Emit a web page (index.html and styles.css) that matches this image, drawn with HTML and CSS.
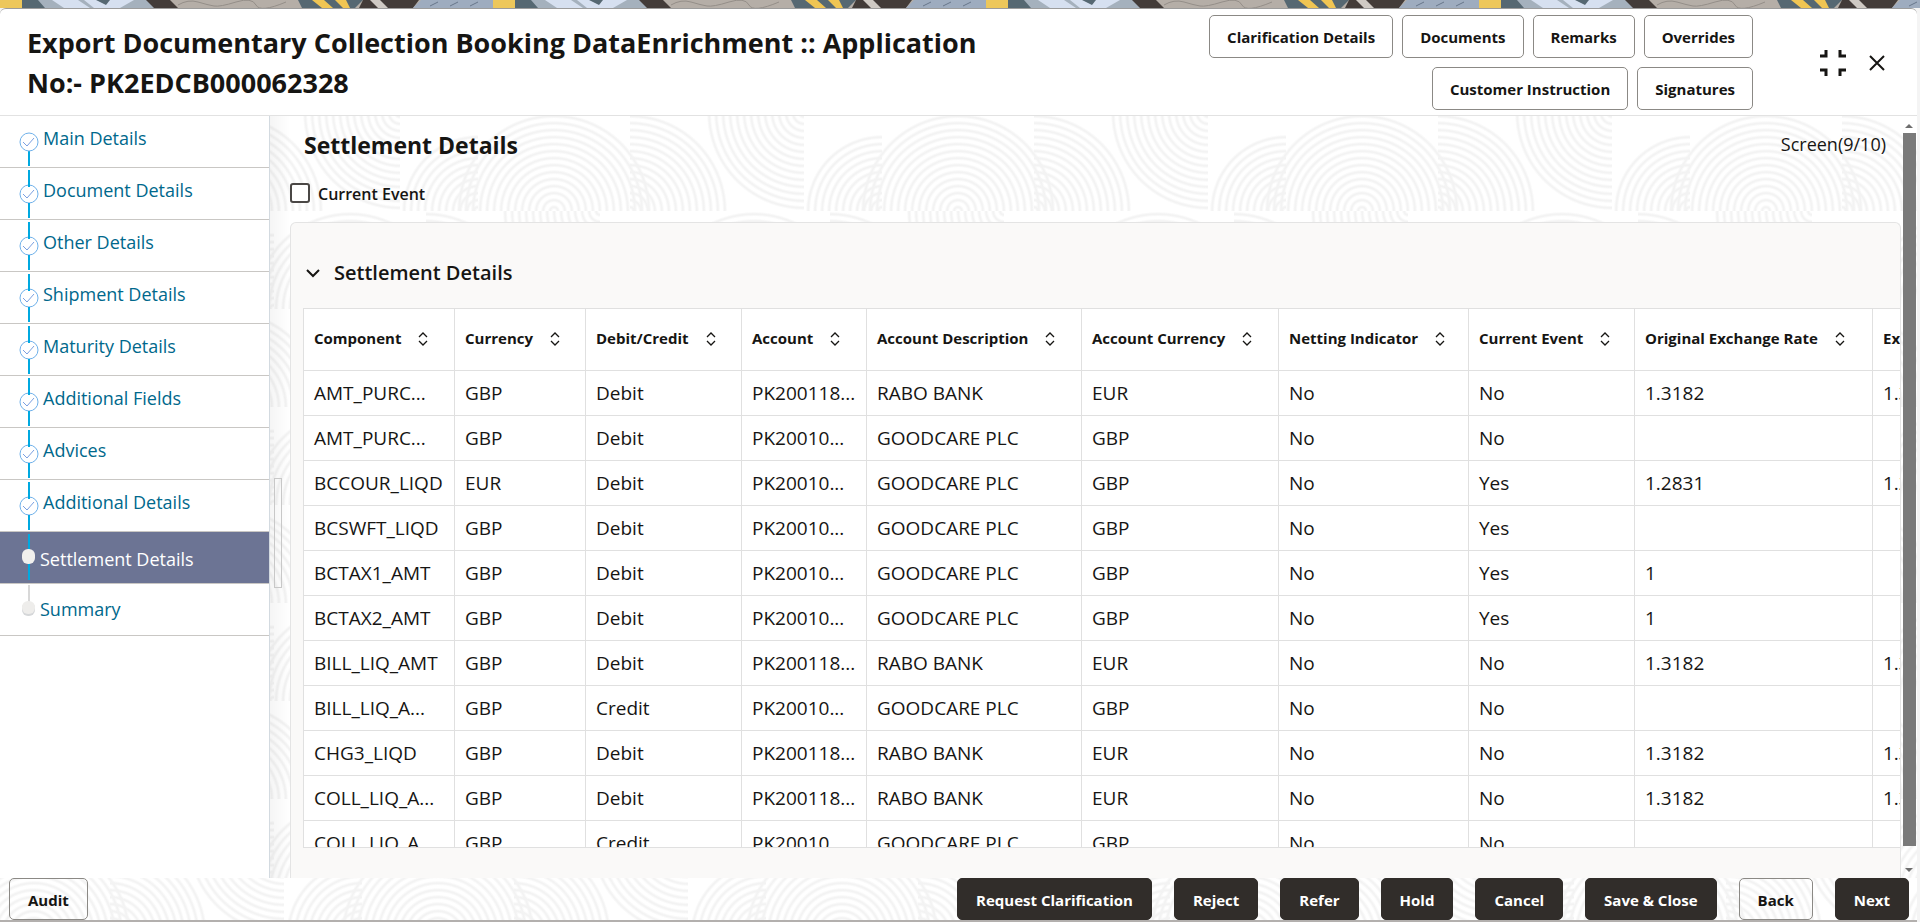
FILE: index.html
```
<!DOCTYPE html>
<html lang="en">
    <head>
        <meta charset="utf-8">
        <title>Export Documentary Collection Booking DataEnrichment</title>
        <link rel="stylesheet" href="styles.css">
    </head>
    <body>
        <svg class="symbols" aria-hidden="true">
            <symbol id="step-first" viewBox="0 0 20 51">
                <path d="M10 35v15" stroke="#00a9e0" stroke-width="2"/>
                <circle cx="10" cy="26" r="9" fill="#fff" stroke="#6fb1ea"/>
                <path d="M4 26l4 4 7-8" fill="none" stroke="#7a9fe0"/>
            </symbol>
            <symbol id="step-done" viewBox="0 0 20 51">
                <circle cx="10" cy="26" r="9" fill="#fff" stroke="#6fb1ea"/>
                <path d="M10 2v17M10 35v15" stroke="#00a9e0" stroke-width="2"/>
                <path d="M4 26l4 4 7-8" fill="none" stroke="#7a9fe0"/>
            </symbol>
            <symbol id="step-current" viewBox="0 0 20 51">
                <path d="M10 2v46" stroke="#00a9e0" stroke-width="2"/>
                <rect x="3" y="17" width="13" height="15" rx="6" fill="#f1efed"/>
            </symbol>
            <symbol id="step-next" viewBox="0 0 20 51">
                <path d="M10 1v18" stroke="#d8d8d8" stroke-width="2"/>
                <rect x="3" y="18" width="13" height="14" rx="6" fill="#d5d7d9"/>
                <rect x="3" y="17" width="13" height="13" rx="6" fill="#eeedeb"/>
            </symbol>
            <symbol id="sort" viewBox="0 0 10 14">
                <path d="M1 5l4-4 4 4M1 9l4 4 4-4" fill="none" stroke="#161513" stroke-width="1.3"/>
            </symbol>
        </svg>
        <svg class="strip" aria-hidden="true">
            <defs>
                <pattern id="weave" width="493" height="8" patternUnits="userSpaceOnUse">
                    <rect width="493" height="8" fill="#b5aea7"/>
                    <path d="M0 0h22v8H0z" fill="#edc75b"/>
                    <path d="M22 0h20l5 8H22z" fill="#566872"/>
                    <path d="M38 0h120v8H45z" fill="#a5b1bd"/>
                    <path d="M52 0h26l12 8H64zM84 0h50l-14 8H94z" fill="#d6e0f0"/>
                    <path d="M96 0h14l-4 5z" fill="#566872"/>
                    <path d="M146 0h24l8 8h-24z" fill="#433c39"/>
                    <path d="M178 5q10-6 20-3t16 4 22-4 20 3 30-3" fill="none" stroke="#948e88"/>
                    <path d="M298 0h65l-8 8h-53z" fill="#566872"/>
                    <path d="M312 0h12l9 8h-11zM335 0h11l4 8h-7z" fill="#f0c553"/>
                    <path d="M363 0h56l-6 8h-54z" fill="#433c39"/>
                    <path d="M370 0h10l8 8h-10z" fill="#cfcac4"/>
                    <path d="M421 0h72v8h-80z" fill="#9eacbf"/>
                    <path d="M430 6l8-4M450 6l8-4M470 6l8-4" stroke="#67768a"/>
                </pattern>
            </defs>
            <rect width="100%" height="8" fill="url(#weave)"/>
        </svg>
        <div class="dialog">
            <header class="dialog-header">
                <h1>Export Documentary Collection Booking DataEnrichment :: Application No:- PK2EDCB000062328</h1>
                <div class="header-buttons">
                    <button class="btn">Clarification Details</button>
                    <button class="btn">Documents</button>
                    <button class="btn">Remarks</button>
                    <button class="btn">Overrides</button>
                    <button class="btn">Customer Instruction</button>
                    <button class="btn">Signatures</button>
                </div>
                <div class="window-buttons">
                    <button class="icon-btn" aria-label="Collapse">
                        <svg width="28" height="28" viewBox="0 0 28 28"><path d="M1 7h6V1M21 1v6h6M1 21h6v6M21 27v-6h6" fill="none" stroke="#161513" stroke-width="3"/></svg>
                    </button>
                    <button class="icon-btn" aria-label="Close">
                        <svg width="18" height="18" viewBox="0 0 18 18"><path d="M2 2l14 14M16 2L2 16" fill="none" stroke="#161513" stroke-width="2"/></svg>
                    </button>
                </div>
            </header>
            <div class="dialog-body">
                <nav class="steps">
                    <ul>
                        <li><svg><use href="#step-first"/></svg><a href="#">Main Details</a></li>
                        <li><svg><use href="#step-done"/></svg><a href="#">Document Details</a></li>
                        <li><svg><use href="#step-done"/></svg><a href="#">Other Details</a></li>
                        <li><svg><use href="#step-done"/></svg><a href="#">Shipment Details</a></li>
                        <li><svg><use href="#step-done"/></svg><a href="#">Maturity Details</a></li>
                        <li><svg><use href="#step-done"/></svg><a href="#">Additional Fields</a></li>
                        <li><svg><use href="#step-done"/></svg><a href="#">Advices</a></li>
                        <li><svg><use href="#step-done"/></svg><a href="#">Additional Details</a></li>
                        <li class="pending current"><svg><use href="#step-current"/></svg><a href="#">Settlement Details</a></li>
                        <li class="pending"><svg><use href="#step-next"/></svg><a href="#">Summary</a></li>
                    </ul>
                </nav>
                <div class="splitter"><span class="splitter-handle"></span></div>
                <main class="content">
                    <div class="content-head">
                        <h2>Settlement Details</h2>
                        <span class="screen-count">Screen(9/10)</span>
                    </div>
                    <div class="check-row">
                        <input type="checkbox" id="current_event">
                        <label for="current_event">Current Event</label>
                    </div>
                    <section class="panel">
                        <h3>
                            <svg width="16" height="10" viewBox="0 0 16 10"><path d="M2 2l6 6 6-6" fill="none" stroke="#161513" stroke-width="2"/></svg>
                            Settlement Details
                        </h3>
                        <div class="table-wrap">
                            <table>
                                <colgroup>
                                    <col class="c-component"><col class="c-currency"><col class="c-drcr"><col class="c-account"><col class="c-desc">
                                    <col class="c-accccy"><col class="c-netting"><col class="c-event"><col class="c-origrate"><col class="c-rate">
                                </colgroup>
                                <thead>
                                    <tr>
                                        <th>Component<svg><use href="#sort"/></svg></th>
                                        <th>Currency<svg><use href="#sort"/></svg></th>
                                        <th>Debit/Credit<svg><use href="#sort"/></svg></th>
                                        <th>Account<svg><use href="#sort"/></svg></th>
                                        <th>Account Description<svg><use href="#sort"/></svg></th>
                                        <th>Account Currency<svg><use href="#sort"/></svg></th>
                                        <th>Netting Indicator<svg><use href="#sort"/></svg></th>
                                        <th>Current Event<svg><use href="#sort"/></svg></th>
                                        <th>Original Exchange Rate<svg><use href="#sort"/></svg></th>
                                        <th>Exchange Rate</th>
                                    </tr>
                                </thead>
                                <tbody>
                                    <tr><td>AMT_PURC...</td><td>GBP</td><td>Debit</td><td>PK200118...</td><td>RABO BANK</td><td>EUR</td><td>No</td><td>No</td><td>1.3182</td><td>1.3182</td></tr>
                                    <tr><td>AMT_PURC...</td><td>GBP</td><td>Debit</td><td>PK20010...</td><td>GOODCARE PLC</td><td>GBP</td><td>No</td><td>No</td><td></td><td></td></tr>
                                    <tr><td>BCCOUR_LIQD</td><td>EUR</td><td>Debit</td><td>PK20010...</td><td>GOODCARE PLC</td><td>GBP</td><td>No</td><td>Yes</td><td>1.2831</td><td>1.2831</td></tr>
                                    <tr><td>BCSWFT_LIQD</td><td>GBP</td><td>Debit</td><td>PK20010...</td><td>GOODCARE PLC</td><td>GBP</td><td>No</td><td>Yes</td><td></td><td></td></tr>
                                    <tr><td>BCTAX1_AMT</td><td>GBP</td><td>Debit</td><td>PK20010...</td><td>GOODCARE PLC</td><td>GBP</td><td>No</td><td>Yes</td><td>1</td><td></td></tr>
                                    <tr><td>BCTAX2_AMT</td><td>GBP</td><td>Debit</td><td>PK20010...</td><td>GOODCARE PLC</td><td>GBP</td><td>No</td><td>Yes</td><td>1</td><td></td></tr>
                                    <tr><td>BILL_LIQ_AMT</td><td>GBP</td><td>Debit</td><td>PK200118...</td><td>RABO BANK</td><td>EUR</td><td>No</td><td>No</td><td>1.3182</td><td>1.3182</td></tr>
                                    <tr><td>BILL_LIQ_A...</td><td>GBP</td><td>Credit</td><td>PK20010...</td><td>GOODCARE PLC</td><td>GBP</td><td>No</td><td>No</td><td></td><td></td></tr>
                                    <tr><td>CHG3_LIQD</td><td>GBP</td><td>Debit</td><td>PK200118...</td><td>RABO BANK</td><td>EUR</td><td>No</td><td>No</td><td>1.3182</td><td>1.3182</td></tr>
                                    <tr><td>COLL_LIQ_A...</td><td>GBP</td><td>Debit</td><td>PK200118...</td><td>RABO BANK</td><td>EUR</td><td>No</td><td>No</td><td>1.3182</td><td>1.3182</td></tr>
                                    <tr><td>COLL_LIQ_A...</td><td>GBP</td><td>Credit</td><td>PK20010...</td><td>GOODCARE PLC</td><td>GBP</td><td>No</td><td>No</td><td></td><td></td></tr>
                                </tbody>
                            </table>
                        </div>
                    </section>
                </main>
                <div class="scrollbar" aria-hidden="true">
                    <span class="arrow-up"></span>
                    <span class="thumb"></span>
                    <span class="arrow-down"></span>
                </div>
            </div>
            <footer class="dialog-footer">
                <button class="btn audit">Audit</button>
                <button class="btn dark">Request Clarification</button>
                <button class="btn dark">Reject</button>
                <button class="btn dark">Refer</button>
                <button class="btn dark">Hold</button>
                <button class="btn dark">Cancel</button>
                <button class="btn dark">Save &amp; Close</button>
                <button class="btn">Back</button>
                <button class="btn dark">Next</button>
            </footer>
        </div>
    </body>
</html>
```
FILE: styles.css
```
* {
    box-sizing: border-box;
}
html, body {
    height: 100%;
}
body {
    margin: 0;
    display: flex;
    flex-direction: column;
    overflow: hidden;
    background: #f4f4f4;
    color: #161513;
    font-family: "Open Sans", "Noto Sans", sans-serif;
    font-size: 18px;
}
.symbols {
    display: none;
}
.strip {
    display: block;
    flex: none;
    width: 100%;
    height: 8px;
}
.dialog {
    flex: 1;
    min-height: 0;
    display: flex;
    flex-direction: column;
    margin-right: 3px;
    background: #fff;
    border-top: 1px solid #9c9c9c;
    border-bottom: 2px solid #b3b0ae;
    border-radius: 6px 6px 0 0;
}
.dialog-header {
    flex: none;
    display: flex;
    align-items: center;
    height: 107px;
    padding: 1px 31px 0 27px;
    border-bottom: 1px solid #e2e2e2;
}
h1 {
    flex: 1;
    margin: 0;
    padding-right: 160px;
    font-size: 27px;
    line-height: 40px;
    font-weight: 700;
}
.header-buttons {
    display: flex;
    flex-wrap: wrap;
    justify-content: flex-end;
    gap: 9px;
    width: 560px;
}
.btn {
    height: 43px;
    padding: 0 17px;
    border: 1px solid #8b8985;
    border-radius: 5px;
    background: transparent;
    color: #161513;
    font-family: inherit;
    font-size: 15px;
    font-weight: 700;
    white-space: nowrap;
}
.btn.dark {
    background: #312d2a;
    border-color: #312d2a;
    color: #fff;
}
.window-buttons {
    display: flex;
    align-items: center;
    gap: 21px;
    margin-left: 66px;
}
.icon-btn {
    display: flex;
    padding: 0;
    border: none;
    background: none;
}

.dialog-body {
    flex: 1;
    min-height: 0;
    display: flex;
    overflow: hidden;
}
.dialog-body,
.dialog-footer {
    background-color: #fff;
    background-image: url("data:image/svg+xml,%3Csvg xmlns='http://www.w3.org/2000/svg' width='404' height='196'%3E%3Cdefs%3E%3CradialGradient id='r' gradientUnits='userSpaceOnUse' cx='0' cy='0' r='7' spreadMethod='repeat'%3E%3Cstop offset='.2' stop-color='%23f3f3f3' stop-opacity='0'/%3E%3Cstop offset='.5' stop-color='%23f3f3f3'/%3E%3Cstop offset='.6' stop-color='%23f3f3f3'/%3E%3Cstop offset='.9' stop-color='%23f3f3f3' stop-opacity='0'/%3E%3C/radialGradient%3E%3Cg id='a' fill='url(%23r)'%3E%3Cpath transform='translate(78 98)' d='M0 0H-78A78 78 0 0 1 0-78z'/%3E%3Cpath transform='translate(230 98)' d='M0 0V-98A98 98 0 0 1 98 0z'/%3E%3Cpath transform='translate(154 98)' d='M-98 0A98 98 0 0 1 98 0z'/%3E%3Cpath transform='translate(404 0)' d='M0 0H-98A98 98 0 0 0 0 98z'/%3E%3C/g%3E%3C/defs%3E%3Cuse href='%23a'/%3E%3Cuse href='%23a' x='200' y='98'/%3E%3Cuse href='%23a' x='-204' y='98'/%3E%3C/svg%3E");
    background-position: -4px -3px;
}

.steps {
    flex: none;
    width: 270px;
    background: #fff;
    border-right: 1px solid #d3dae0;
}
.steps ul {
    margin: 0;
    padding: 0;
    list-style: none;
}
.steps li {
    display: flex;
    height: 52px;
    padding-left: 19px;
    border-bottom: 1px solid #c9c7c4;
}
.steps svg {
    flex: none;
    width: 20px;
    height: 51px;
}
.steps a {
    padding-left: 4px;
    color: #00688c;
    line-height: 44px;
    text-decoration: none;
}
.steps .pending a {
    padding-left: 1px;
    line-height: 51px;
}
.steps .current {
    background: #6c7494;
}
.steps .current a {
    color: #fff;
    line-height: 54px;
}
.splitter {
    flex: none;
    display: flex;
    align-items: center;
    width: 20px;
    padding: 72px 0 0 4px;
    background: linear-gradient(to right, rgba(0, 0, 0, 0.04), rgba(0, 0, 0, 0));
}
.splitter-handle {
    width: 8px;
    height: 110px;
    border: 1px solid #c8c8c8;
}

.content {
    flex: 1;
    min-width: 0;
    display: flex;
    flex-direction: column;
}
.content-head {
    display: flex;
    justify-content: space-between;
    height: 60px;
    padding: 0 15px 0 14px;
    line-height: 58px;
}
.screen-count {
    line-height: 56px;
}
h2 {
    margin: 0;
    font-size: 23px;
    font-weight: 700;
}
.check-row {
    display: flex;
    align-items: center;
    gap: 8px;
    height: 46px;
    padding-bottom: 13px;
    font-size: 16px;
    font-weight: 600;
}
.check-row input {
    appearance: none;
    width: 20px;
    height: 20px;
    margin: 0;
    border: 2px solid #4a4745;
    border-radius: 3px;
    background: #fff;
}
.check-row label {
    padding-top: 2px;
}
.panel {
    flex: 1;
    min-height: 0;
    display: flex;
    flex-direction: column;
    padding: 0 0 30px 12px;
    background: #faf9f8;
    border: 1px solid #e4e4e4;
    border-bottom: none;
    border-radius: 6px 6px 0 0;
}
h3 {
    flex: none;
    display: flex;
    align-items: center;
    gap: 13px;
    height: 85px;
    margin: 0;
    padding: 14px 0 0 2px;
    font-size: 20px;
    font-weight: 600;
}
.table-wrap {
    flex: 1;
    min-height: 0;
    overflow: hidden;
    background: #fff;
    border: 1px solid #e0e0e0;
    border-right: none;
}
table {
    width: 1720px;
    table-layout: fixed;
    border-collapse: separate;
    border-spacing: 0;
}
.c-component { width: 151px; }
.c-currency { width: 131px; }
.c-drcr { width: 156px; }
.c-account { width: 125px; }
.c-desc { width: 215px; }
.c-accccy { width: 197px; }
.c-netting { width: 190px; }
.c-event { width: 166px; }
.c-origrate { width: 238px; }
th, td {
    padding: 0 0 0 10px;
    border-right: 1px solid #e0e0e0;
    border-bottom: 1px solid #e0e0e0;
    text-align: left;
    white-space: nowrap;
}
th {
    height: 62px;
    padding-bottom: 3px;
    font-size: 15px;
    font-weight: 700;
}
th svg {
    width: 10px;
    height: 14px;
    margin-left: 17px;
    vertical-align: -2px;
}
td {
    height: 45px;
    font-size: 19px;
}

.scrollbar {
    flex: none;
    display: flex;
    flex-direction: column;
    align-items: center;
    width: 16px;
    padding: 8px 0 6px;
}
.thumb {
    flex: 1;
    width: 13px;
    margin: 5px 0 22px;
    background: #7a7a7a;
}
.arrow-up,
.arrow-down {
    border: 4px solid transparent;
}
.arrow-up {
    border-top: none;
    border-bottom-color: #6e6e6e;
}
.arrow-down {
    border-bottom: none;
    border-top-color: #6e6e6e;
}

.dialog-footer {
    flex: none;
    display: flex;
    gap: 22px;
    padding: 0 8px 0 9px;
    background-position: -120px -40px;
}
.dialog-footer .btn {
    height: 42px;
    padding: 1px 18px 0;
}
.dialog-footer .audit {
    margin-right: auto;
}
```
